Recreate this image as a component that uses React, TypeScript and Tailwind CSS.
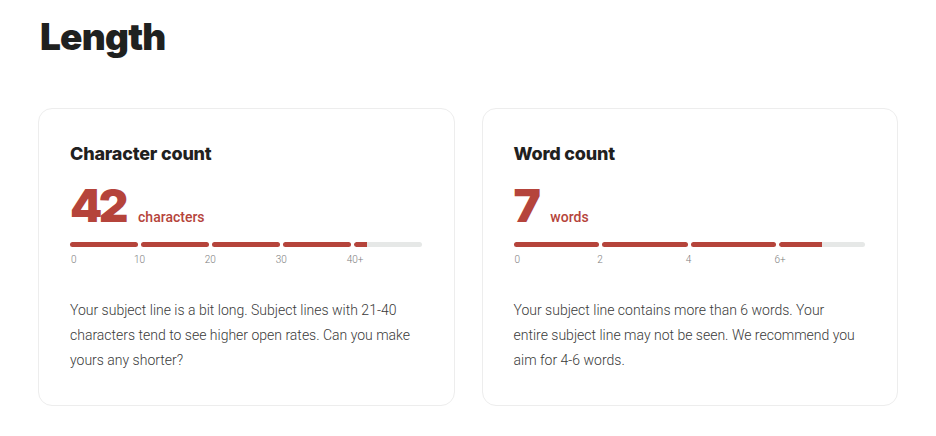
import React from "react";

type Meter = {
	title: string;
	value: number;
	unit: string;
	ticks: string[];
	perTick: number;
	text: string;
};

const meters: Meter[] = [
	{
		title: "Character count",
		value: 42,
		unit: "characters",
		ticks: ["0", "10", "20", "30", "40+"],
		perTick: 10,
		text: "Your subject line is a bit long. Subject lines with 21-40 characters tend to see higher open rates. Can you make yours any shorter?",
	},
	{
		title: "Word count",
		value: 7,
		unit: "words",
		ticks: ["0", "2", "4", "6+"],
		perTick: 2,
		text: "Your subject line contains more than 6 words. Your entire subject line may not be seen. We recommend you aim for 4-6 words.",
	},
];

function MeterCard({ meter }: { meter: Meter }) {
	const segments = meter.ticks.length;
	return (
		<div className="rounded-[14px] border border-[#ededed] bg-white pr-8 pl-[31px] pt-[33px] pb-[32px]">
			<h2 className="font-['Inter'] text-[18px] leading-6 font-extrabold tracking-[-0.2px] text-[#1f2120]">
				{meter.title}
			</h2>

			<div className="mt-[15px] flex items-baseline">
				<span className="font-['Inter'] text-[46px] leading-[48px] font-black tracking-[-3.5px] text-[#b5443b]">
					{meter.value}
				</span>
				<span className="ml-[13px] font-['Roboto'] text-[14px] font-medium text-[#b5443b]">
					{meter.unit}
				</span>
			</div>

			{/* Segmented bar */}
			<div className="mt-[13px] flex gap-[3px]">
				{meter.ticks.map((_, i) => {
					const start = i * meter.perTick;
					const fill = Math.max(0, Math.min(1, (meter.value - start) / meter.perTick));
					const isLast = i === segments - 1;
					return (
						<div
							key={i}
							className={`h-[5px] flex-1 overflow-hidden rounded-full ${isLast ? "bg-[#e6e8e7]" : "bg-[#b5443b]"}`}
						>
							{isLast && (
								<div className="h-full rounded-l-full bg-[#b5443b]" style={{ width: `${fill * 100}%` }} />
							)}
						</div>
					);
				})}
			</div>

			<div className="mt-[6px] flex gap-[3px] text-[10px] leading-3">
				{meter.ticks.map((t, i) => (
					<div key={i} className="flex-1">
						<span
							className={`font-['Roboto'] font-light text-[#7d7d7d] ${i === 0 ? "ml-px" : t.replace("+", "").length > 1 ? "-ml-[7px]" : "-ml-[5px]"}`}
						>
							{t}
						</span>
					</div>
				))}
			</div>

			<p className="mt-[32px] max-w-[348px] font-['Roboto'] text-[14px] leading-[25px] font-light text-[#3a3a3a]">
				{meter.text}
			</p>
		</div>
	);
}

export default function App() {
	return (
		<div className="min-h-screen bg-white px-[38px] pt-[14px]">
			<h1 className="pl-[2px] font-['Inter'] text-[37px] leading-[46px] font-black tracking-[-0.8px] text-[#1f2120]">
				Length
			</h1>

			<div className="mt-[48px] grid grid-cols-2 gap-[27px]">
				{meters.map((m) => (
					<MeterCard key={m.title} meter={m} />
				))}
			</div>
		</div>
	);
}
